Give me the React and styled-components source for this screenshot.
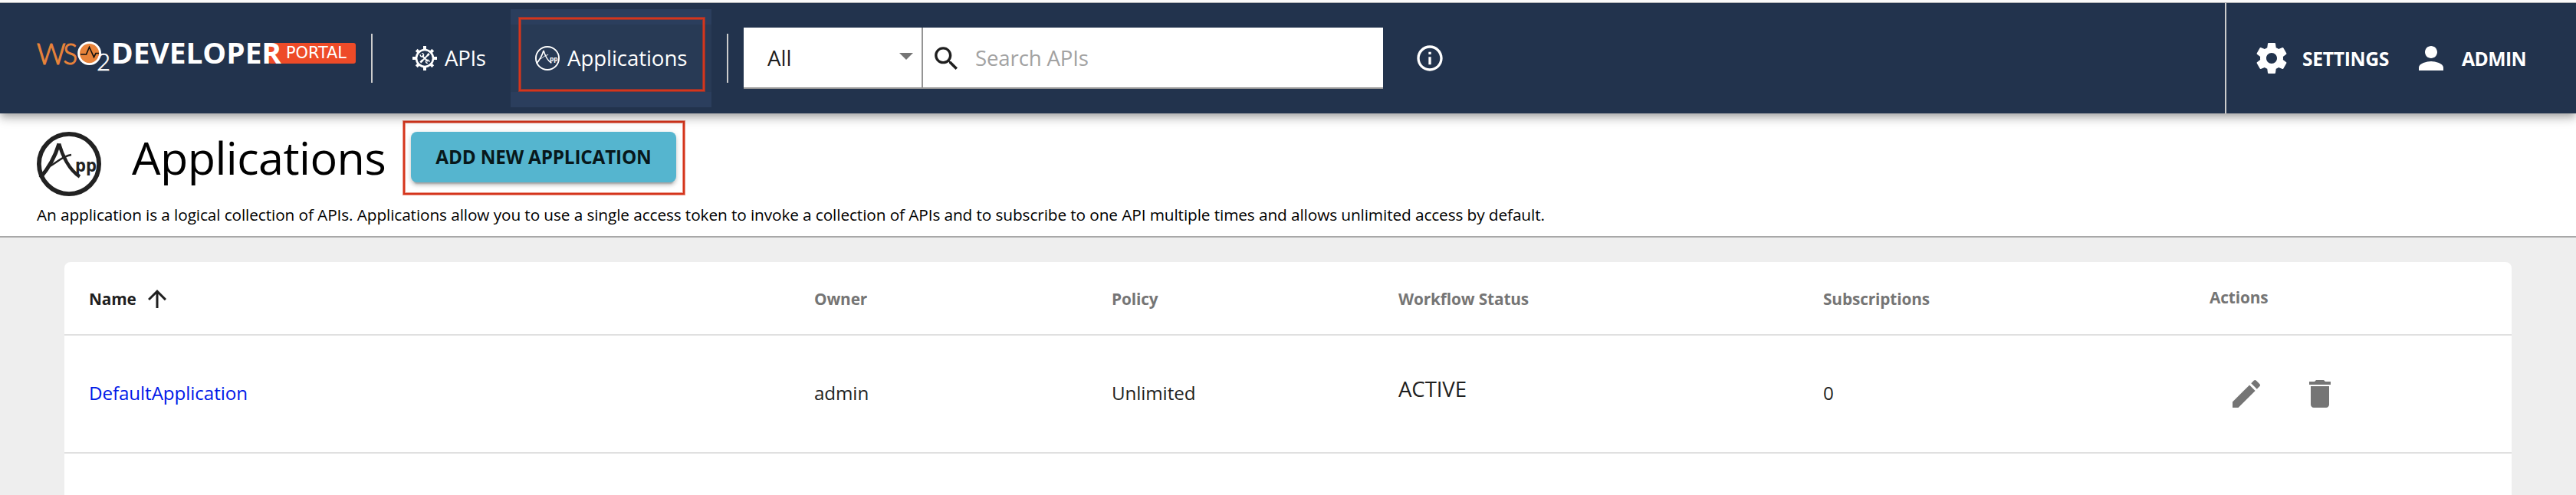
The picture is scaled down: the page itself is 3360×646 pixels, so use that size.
import React from 'react';
import styled, { createGlobalStyle } from 'styled-components';

const Global = createGlobalStyle`
  * { box-sizing: border-box; }
  body {
    margin: 0; overflow: hidden; background: #eeeeee; color: #1f1f1f;
    font-family: 'Open Sans', 'Liberation Sans', sans-serif;
  }
`;
const Page = styled.div`
  display: flex; flex-direction: column; width: 3360px; height: 646px; overflow: hidden;
  border-top: 3px solid #fafafa;
`;

/* Header bar */
const Header = styled.header`
  position: relative; z-index: 1; flex: none; display: flex; align-items: center; height: 145px;
  padding-left: 48px; background: #22334d; color: #fff; border-top: 1px solid #a9abae;
  box-shadow: 0 4px 8px -2px rgba(0,0,0,.2), 0 8px 10px 0 rgba(0,0,0,.14), 0 2px 20px 0 rgba(0,0,0,.12);
`;
const Logo = styled.svg`display: block; flex: none; width: 418px; height: 64px; overflow: visible;`;
const Divider = styled.div`
  flex: none; width: 2px; height: 64px; background: #cccccc; margin-left: ${p => p.$gap}px;
`;
const NavLink = styled.a`
  position: relative; flex: none; display: flex; align-items: center; height: 128px; gap: 10px; font-size: 27.6px;
  width: ${p => p.$w}px; padding-left: ${p => p.$pad}px;
  background: ${p => (p.$active ? 'linear-gradient(#2b3e5d 20px, #283a55 20px, #283a55 108px, #2b3e5d 108px)' : 'none')};
`;
const Label = styled.span`
  display: block; white-space: nowrap; line-height: 1; letter-spacing: ${p => p.$ls || 0}px;
`;
const Callout = styled.span`
  position: absolute; pointer-events: none; border: 2px solid #d5351c;
  box-shadow: 0 0 0 1px rgba(213,53,28,.55), inset 0 0 0 1px rgba(213,53,28,.55);
  top: ${p => p.$t}px; left: ${p => p.$l}px; width: ${p => p.$w}px; height: ${p => p.$h}px;
`;
const Search = styled.div`
  flex: none; display: flex; width: 834px; height: 80px; margin-left: 20px; background: #fff;
  border-bottom: 2px solid #949494; color: #1f1f1f; font-size: 27.6px;
`;
const Select = styled.div`
  display: flex; align-items: center; justify-content: space-between; width: 234px; padding: 2px 11px 0 31px;
  border-right: 2px solid #949494;
`;
const DropArrow = styled.svg`display: block; width: 18px; height: 9px; margin-bottom: 5px; fill: #757575;`;
const Field = styled.div`
  display: flex; align-items: center; padding: 2px 0 0 10px; gap: 17px; color: #a2a2a2;
`;
const Info = styled.div`display: flex; margin-left: 41px;`;
const Account = styled.div`
  margin-left: auto; display: flex; align-items: center; gap: 31px; width: 458px; height: 144px;
  border-left: 2px solid #cccccc; padding-left: 35px; font-size: 24.7px; font-weight: 700;
`;
const AccountItem = styled.div`
  display: flex; align-items: center; gap: 16px;
  ${Label} { padding-top: 3px; }
`;

/* Page title */
const Hero = styled.section`
  flex: none; height: 162px; background: #fff; border-bottom: 2px solid #a8a8a8; padding: 22px 48px 0; color: #000;
`;
const TitleRow = styled.div`display: flex; align-items: flex-start; height: 86px;`;
const TitleIcon = styled.div`margin-top: 2px; color: #222;`;
const Title = styled.h1`
  margin: 3px 0 0 40px; width: 324px; font-size: 59.3px; font-weight: 400; line-height: 64px; white-space: nowrap;
  letter-spacing: -0.55px;
`;
const AddButton = styled.button`
  position: relative; margin: 2px 0 0 40px; width: 346px; height: 66px; border: 0; border-radius: 8px; padding: 0;
  background: #55b5cf; color: #08181b; font: 700 24.3px/66px 'Open Sans', sans-serif; white-space: nowrap;
  letter-spacing: -0.18px;
  box-shadow: 0 6px 2px -4px rgba(0,0,0,.2), 0 4px 4px 0 rgba(0,0,0,.14), 0 2px 10px 0 rgba(0,0,0,.12);
`;
const Description = styled.p`
  margin: 0; padding-top: 9px; font-size: 20.8px; line-height: 30px; white-space: nowrap; letter-spacing: -0.105px;
`;

/* Applications table */
const Table = styled.main`
  margin: 32px 84px 0; flex: 1; background: #fff; border-radius: 8px 8px 0 0;
`;
const Row = styled.div`
  display: grid; grid-template-columns: 946px 388px 374px 554px 504px 1fr; align-items: center;
  height: ${p => p.$h}px; padding-left: 32px; border-bottom: 2px solid #e0e0e0;
`;
const HeadCell = styled.div`
  display: flex; align-items: center; gap: 9px; font-size: 20.8px; font-weight: 700; line-height: 30px;
  letter-spacing: -0.12px; color: ${p => (p.$sorted ? '#1f1f1f' : '#757575')};
  padding: ${p => (p.$raised ? '0 0 2px' : '2px 0 0')};
`;
const Cell = styled.div`
  font-size: ${p => (p.$large ? 27.6 : 24.2)}px; line-height: 34px; padding-bottom: ${p => (p.$large ? 14 : 2)}px;
  letter-spacing: -0.09px; color: ${p => (p.$link ? '#0018e8' : '#1f1f1f')};
`;
const Actions = styled.div`display: flex; gap: 48px; padding-left: 24px;`;

/* Icons */
const Svg = styled.svg`display: block; flex: none; fill: ${p => p.$fill};`;
const LineSvg = styled.svg`display: block; flex: none; fill: none; stroke: currentColor;`;

const Glyph = ({ size, d, fill = 'currentColor' }) => (
  <Svg width={size} height={size} viewBox="0 0 24 24" $fill={fill}><path d={d} /></Svg>
);
const icons = {
  search: 'M15.5 14h-.79l-.28-.27C15.41 12.59 16 11.11 16 9.5 16 5.91 13.09 3 9.5 3S3 5.91 3 9.5 5.91 16 9.5 16c1.61 0 3.09-.59 4.23-1.57l.27.28v.79l5 4.99L20.49 19l-4.99-5zm-6 0C7.01 14 5 11.99 5 9.5S7.01 5 9.5 5 14 7.01 14 9.5 11.99 14 9.5 14z',
  info: 'M11 17h2v-6h-2v6zm1-15C6.48 2 2 6.48 2 12s4.48 10 10 10 10-4.48 10-10S17.52 2 12 2zm0 18c-4.41 0-8-3.59-8-8s3.59-8 8-8 8 3.59 8 8-3.59 8-8 8zM11 9h2V7h-2v2z',
  settings: 'M19.43 12.98c.04-.32.07-.64.07-.98s-.03-.66-.07-.98l2.11-1.65c.19-.15.24-.42.12-.64l-2-3.46c-.12-.22-.39-.3-.61-.22l-2.49 1c-.52-.4-1.08-.73-1.69-.98l-.38-2.65C14.46 2.18 14.25 2 14 2h-4c-.25 0-.46.18-.49.42l-.38 2.65c-.61.25-1.17.59-1.69.98l-2.49-1c-.23-.09-.49 0-.61.22l-2 3.46c-.13.22-.07.49.12.64l2.11 1.65c-.04.32-.07.65-.07.98s.03.66.07.98l-2.11 1.65c-.19.15-.24.42-.12.64l2 3.46c.12.22.39.3.61.22l2.49-1c.52.4 1.08.73 1.69.98l.38 2.65c.03.24.24.42.49.42h4c.25 0 .46-.18.49-.42l.38-2.65c.61-.25 1.17-.59 1.69-.98l2.49 1c.23.09.49 0 .61-.22l2-3.46c.12-.22.07-.49-.12-.64l-2.11-1.65zM12 15.5c-1.93 0-3.5-1.57-3.5-3.5s1.57-3.5 3.5-3.5 3.5 1.57 3.5 3.5-1.57 3.5-3.5 3.5z',
  person: 'M12 12c2.21 0 4-1.79 4-4s-1.79-4-4-4-4 1.79-4 4 1.79 4 4 4zm0 2c-2.67 0-8 1.34-8 4v2h16v-2c0-2.66-5.33-4-8-4z',
  arrowUp: 'M4 12l1.41 1.41L11 7.83V20h2V7.83l5.58 5.59L20 12l-8-8-8 8z',
  edit: 'M3 17.25V21h3.75L17.81 9.94l-3.75-3.75L3 17.25zM20.71 7.04c.39-.39.39-1.02 0-1.41l-2.34-2.34c-.39-.39-1.02-.39-1.41 0l-1.83 1.83 3.75 3.75 1.83-1.83z',
  remove: 'M6 19c0 1.1.9 2 2 2h8c1.1 0 2-.9 2-2V7H6v12zM19 4h-3.5l-1-1h-5l-1 1H5v2h14V4z',
};

const GearIcon = () => (
  <LineSvg width="32" height="32" viewBox="0 0 32 32">
    <circle cx="16" cy="16" r="11" strokeWidth="2.600" />
    {[0, 45, 90, 135, 180, 225, 270, 315].map(a => (
      <rect key={a} x="14" y={a % 90 ? 0.8 : 0} width="4" height={a % 90 ? 3.6 : 4.5} fill="currentColor" stroke="none" transform={`rotate(${a} 16 16)`} />
    ))}
    <path d="M12.500 12.500L20 20M20 12L12 20" strokeWidth="1.800" />
    <path d="M10.300 11.300a2.200 2.200 0 1 0 1.800-1.600M21.800 20.900a2.200 2.200 0 1 0-2 1.600" strokeWidth="1.400" />
    <path d="M10.300 21.500l3-3M19.500 12.500l2.300-2.500" strokeWidth="2.600" />
  </LineSvg>
);

const AppIcon = ({ size, ring, leg }) => (
  <LineSvg width={size} height={size} viewBox="0 0 84 84">
    <circle cx="42" cy="42" r={42 - ring / 2} strokeWidth={ring} />
    <path d="M4.500 60C15 48 24 32 29 15.500" strokeWidth={leg} />
    <path d="M29 15.500C33 30 42 50 56 58.500" strokeWidth={leg * 0.9} />
    <path d="M14 46.500C26 41 32 32 45 30" strokeWidth={leg / 2} />
    <text x="50" y="52" fontSize="23" fontWeight="700" fontFamily="DejaVu Sans Mono, monospace" fill="currentColor" stroke="none" textLength="28" lengthAdjust="spacingAndGlyphs">pp</text>
  </LineSvg>
);

const WsoLogo = () => (
  <Logo viewBox="0 0 418 64">
    <g fontFamily="Lato, sans-serif" fontWeight="300" fill="#e8833a" stroke="#e8833a" strokeWidth="1.200" fontSize="38">
      <text x="0" y="39.500" textLength="37.500" lengthAdjust="spacingAndGlyphs">W</text>
      <text x="34.500" y="39.500" textLength="18.500" lengthAdjust="spacingAndGlyphs">S</text>
    </g>
    <circle cx="68.600" cy="25.600" r="14" fill="#e8833a" stroke="#fff" strokeWidth="2.800" />
    <path d="M57 27h7.500l4-9.500 6 13 2.500-5h4" fill="none" stroke="#111" strokeWidth="1.700" />
    <text x="78" y="47.500" fontFamily="Lato, sans-serif" fontWeight="300" fontSize="32" fill="#fff" stroke="#fff" strokeWidth="0.600" textLength="18" lengthAdjust="spacingAndGlyphs">2</text>
    <rect x="302" y="12" width="114" height="27" rx="3" fill="#ee4b28" />
    <text x="97" y="39" fontFamily="Open Sans, sans-serif" fontWeight="700" fontSize="38" fill="#fff" textLength="222" lengthAdjust="spacingAndGlyphs">DEVELOPER</text>
    <text x="325" y="32.300" fontFamily="DejaVu Sans, sans-serif" fontSize="21" fill="#fff" textLength="79" lengthAdjust="spacingAndGlyphs">PORTAL</text>
  </Logo>
);

export default function App() {
  return (
    <>
      <Global />
      <Page>
        <Header>
          <WsoLogo />
          <Divider $gap={18} />
          <NavLink $w={180} $pad={52}>
            <GearIcon />
            <Label $ls={-0.3}>APIs</Label>
          </NavLink>
          <NavLink $active $w={262} $pad={32}>
            <AppIcon size={32} ring={5} leg={4.5} />
            <Label $ls={-0.07}>Applications</Label>
            <Callout $t={11} $l={11} $w={242} $h={96} />
          </NavLink>
          <Divider $gap={20} />
          <Search>
            <Select>
              <Label>All</Label>
              <DropArrow viewBox="0 0 18 9"><path d="M0 0h18l-9 9z" /></DropArrow>
            </Select>
            <Field>
              <Glyph size={41} d={icons.search} fill="#1f1f1f" />
              <Label $ls={-0.15}>Search APIs</Label>
            </Field>
          </Search>
          <Info><Glyph size={40} d={icons.info} /></Info>
          <Account>
            <AccountItem>
              <Glyph size={48} d={icons.settings} />
              <Label $ls={-0.33}>SETTINGS</Label>
            </AccountItem>
            <AccountItem>
              <Glyph size={48} d={icons.person} />
              <Label $ls={-0.6}>ADMIN</Label>
            </AccountItem>
          </Account>
        </Header>
        <Hero>
          <TitleRow>
            <TitleIcon><AppIcon size={84} ring={5.8} leg={5} /></TitleIcon>
            <Title>Applications</Title>
            <AddButton>
              ADD NEW APPLICATION
              <Callout $t={-14} $l={-10} $w={367} $h={96} />
            </AddButton>
          </TitleRow>
          <Description>
            An application is a logical collection of APIs. Applications allow you to use a single access token to invoke a collection of APIs and to subscribe to one API multiple times and allows unlimited access by default.
          </Description>
        </Hero>
        <Table>
          <Row $h={96}>
            <HeadCell $sorted>Name <Glyph size={36} d={icons.arrowUp} /></HeadCell>
            <HeadCell>Owner</HeadCell>
            <HeadCell>Policy</HeadCell>
            <HeadCell>Workflow Status</HeadCell>
            <HeadCell>Subscriptions</HeadCell>
            <HeadCell $raised>Actions</HeadCell>
          </Row>
          <Row $h={154}>
            <Cell $link>DefaultApplication</Cell>
            <Cell>admin</Cell>
            <Cell>Unlimited</Cell>
            <Cell $large>ACTIVE</Cell>
            <Cell>0</Cell>
            <Actions>
              <Glyph size={48} d={icons.edit} fill="#757575" />
              <Glyph size={48} d={icons.remove} fill="#757575" />
            </Actions>
          </Row>
        </Table>
      </Page>
    </>
  );
}
